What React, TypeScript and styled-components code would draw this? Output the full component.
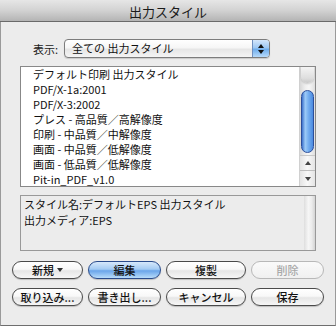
import React from "react";
import styled, { createGlobalStyle, css } from "styled-components";

const Global = createGlobalStyle`
  html, body { margin: 0; padding: 0; background: #ececec; }
  body { font-family: "Noto Sans CJK JP", "Noto Sans", sans-serif; }
`;

const FONT = `"Noto Sans CJK JP", "Noto Sans", sans-serif`;

const Window = styled.div`
  width: 336px;
  height: 326px;
  box-sizing: border-box;
  background: #ececec;
  border-left: 1px solid #9a9a9a;
  border-right: 1px solid #9a9a9a;
  border-bottom: 1px solid #6e6e6e;
  display: flex;
  flex-direction: column;
  font-family: ${FONT};
  color: #000;
`;

const TitleBar = styled.div`
  height: 22px;
  flex: 0 0 22px;
  box-sizing: border-box;
  background: linear-gradient(to bottom, #e6e6e6 0%, #d2d2d2 50%, #b4b4b4 100%);
  border-bottom: 1px solid #6a6a6a;
  display: flex;
  align-items: center;
  justify-content: center;
  font-size: 13px;
  color: #1a1a1a;
  padding-top: 1px;
  margin: 0 -1px;
`;

const Content = styled.div`
  display: flex;
  flex-direction: column;
  padding: 0 19px 0 19px;
`;

const PopupRow = styled.div`
  display: flex;
  align-items: center;
  margin-top: 17px;
  padding-left: 13px;
  gap: 6px;
  height: 19px;
`;

const Label = styled.span`
  font-size: 11px;
  color: #1a1a1a;
  white-space: nowrap;
`;

const Popup = styled.div`
  width: 206px;
  height: 19px;
  box-sizing: border-box;
  border: 1px solid #7c7c7c;
  border-radius: 4px;
  background: linear-gradient(to bottom, #ffffff 0%, #f6f6f6 45%, #e6e6e6 55%, #f4f4f4 100%);
  display: flex;
  align-items: stretch;
  overflow: hidden;
  box-shadow: 0 1px 1px rgba(0, 0, 0, 0.15);
`;

const PopupText = styled.span`
  flex: 1;
  font-size: 11px;
  line-height: 17px;
  padding-left: 7px;
  color: #111;
  white-space: nowrap;
`;

const Stepper = styled.div`
  width: 16px;
  border-left: 1px solid #6f8fbf;
  background: linear-gradient(to bottom, #d4e6fb 0%, #9ec8f3 45%, #6fadec 55%, #b7dafa 100%);
  display: flex;
  flex-direction: column;
  align-items: center;
  justify-content: center;
  gap: 2px;
`;

const Tri = styled.span<{ $dir: "up" | "down"; $color?: string }>`
  width: 0;
  height: 0;
  border-left: 3px solid transparent;
  border-right: 3px solid transparent;
  ${(p) =>
    p.$dir === "up"
      ? css`border-bottom: 4px solid ${p.$color || "#111"};`
      : css`border-top: 4px solid ${p.$color || "#111"};`}
`;

const List = styled.div`
  margin-top: 8px;
  height: 121px;
  box-sizing: border-box;
  border: 1px solid #888;
  background: #fff;
  display: flex;
  overflow: hidden;
`;

const Rows = styled.div`
  flex: 1;
  padding-left: 12px;
`;

const Row = styled.div`
  height: 15px;
  line-height: 14px;
  font-size: 11px;
  color: #111;
  white-space: nowrap;
`;

const ScrollBar = styled.div`
  width: 15px;
  display: flex;
  flex-direction: column;
  border-left: 1px solid #d0d0d0;
  background: linear-gradient(to right, #d8d8d8, #efefef 35%, #f7f7f7 60%, #dedede);
`;

const TrackCap = styled.div`
  height: 16px;
  margin: 0 1px;
  border-radius: 0 0 7px 7px;
  background: linear-gradient(to bottom, #f4f4f4, #dedede 70%, #c8c8c8);
  box-shadow: 0 1px 2px rgba(0, 0, 0, 0.18);
`;

const Track = styled.div<{ $h: number }>`
  height: ${(p) => p.$h}px;
`;

const Thumb = styled.div`
  height: 64px;
  margin: 0 1px 0 1px;
  box-sizing: border-box;
  border: 1px solid #2c4f9c;
  border-radius: 7px;
  background: linear-gradient(to right, #3d72cc 0%, #9ccaf7 30%, #72acef 60%, #4a8ae0 100%);
`;

const ArrowBtn = styled.div<{ $top?: boolean }>`
  height: 15px;
  display: flex;
  align-items: center;
  justify-content: center;
  border-top: 1px solid ${(p) => (p.$top ? "#c8c8c8" : "#bdbdbd")};
  background: linear-gradient(to right, #e4e4e4, #f8f8f8 50%, #e4e4e4);
`;

const Info = styled.div`
  margin-top: 8px;
  height: 56px;
  box-sizing: border-box;
  border: 1px solid #999;
  background: #ececec;
  display: flex;
`;

const InfoText = styled.div`
  flex: 1;
  padding-left: 3px;
  font-size: 11px;
  line-height: 16px;
  color: #111;
`;

const InfoTrack = styled.div`
  width: 11px;
  background: linear-gradient(to right, #dedede, #f6f6f6 40%, #ececec 70%, #d4d4d4);
`;

const ButtonGrid = styled.div`
  margin: 10px -7px 0 -8px;
  display: grid;
  grid-template-columns: 71px 73px 80px 73px;
  column-gap: 5px;
  row-gap: 9px;
`;

const Button = styled.div<{ $variant?: "default" | "disabled" }>`
  height: 18px;
  box-sizing: border-box;
  border-radius: 9px;
  display: flex;
  align-items: center;
  justify-content: center;
  gap: 3px;
  font-size: 11px;
  font-weight: 500;
  line-height: 16px;
  border: 1px solid #4a4a4a;
  color: #111;
  white-space: nowrap;
  background: linear-gradient(to bottom, #ffffff 0%, #f8f8f8 45%, #e6e6e6 55%, #f6f6f6 100%);
  box-shadow: 0 1px 1px rgba(0, 0, 0, 0.2);
  ${(p) =>
    p.$variant === "default" &&
    css`
      border-color: #2a4c8c;
      background: linear-gradient(to bottom, #d6e8fb 0%, #a4cbf3 45%, #6aa5ea 55%, #b8dcfa 100%);
    `}
  ${(p) =>
    p.$variant === "disabled" &&
    css`
      border-color: #b8b8b8;
      color: #a8a8a8;
      background: linear-gradient(to bottom, #fafafa, #f0f0f0);
      box-shadow: none;
    `}
`;

const items = [
  "デフォルト印刷 出力スタイル",
  "PDF/X-1a:2001",
  "PDF/X-3:2002",
  "プレス - 高品質／高解像度",
  "印刷 - 中品質／中解像度",
  "画面 - 中品質／低解像度",
  "画面 - 低品質／低解像度",
  "Pit-in_PDF_v1.0",
];

export default function App() {
  return (
    <>
      <Global />
      <Window>
        <TitleBar>出力スタイル</TitleBar>
        <Content>
          <PopupRow>
            <Label>表示:</Label>
            <Popup>
              <PopupText>全ての 出力スタイル</PopupText>
              <Stepper>
                <Tri $dir="up" />
                <Tri $dir="down" />
              </Stepper>
            </Popup>
          </PopupRow>
          <List>
            <Rows>
              {items.map((t) => (
                <Row key={t}>{t}</Row>
              ))}
            </Rows>
            <ScrollBar>
              <TrackCap />
              <Track $h={7} />
              <Thumb />
              <Track $h={2} />
              <ArrowBtn $top>
                <Tri $dir="up" $color="#444" />
              </ArrowBtn>
              <ArrowBtn>
                <Tri $dir="down" $color="#444" />
              </ArrowBtn>
            </ScrollBar>
          </List>
          <Info>
            <InfoText>
              <div>スタイル名:デフォルトEPS 出力スタイル</div>
              <div>出力メディア:EPS</div>
            </InfoText>
            <InfoTrack />
          </Info>
          <ButtonGrid>
            <Button>
              新規<Tri $dir="down" $color="#333" />
            </Button>
            <Button $variant="default">編集</Button>
            <Button>複製</Button>
            <Button $variant="disabled">削除</Button>
            <Button>取り込み...</Button>
            <Button>書き出し...</Button>
            <Button>キャンセル</Button>
            <Button>保存</Button>
          </ButtonGrid>
        </Content>
      </Window>
    </>
  );
}
